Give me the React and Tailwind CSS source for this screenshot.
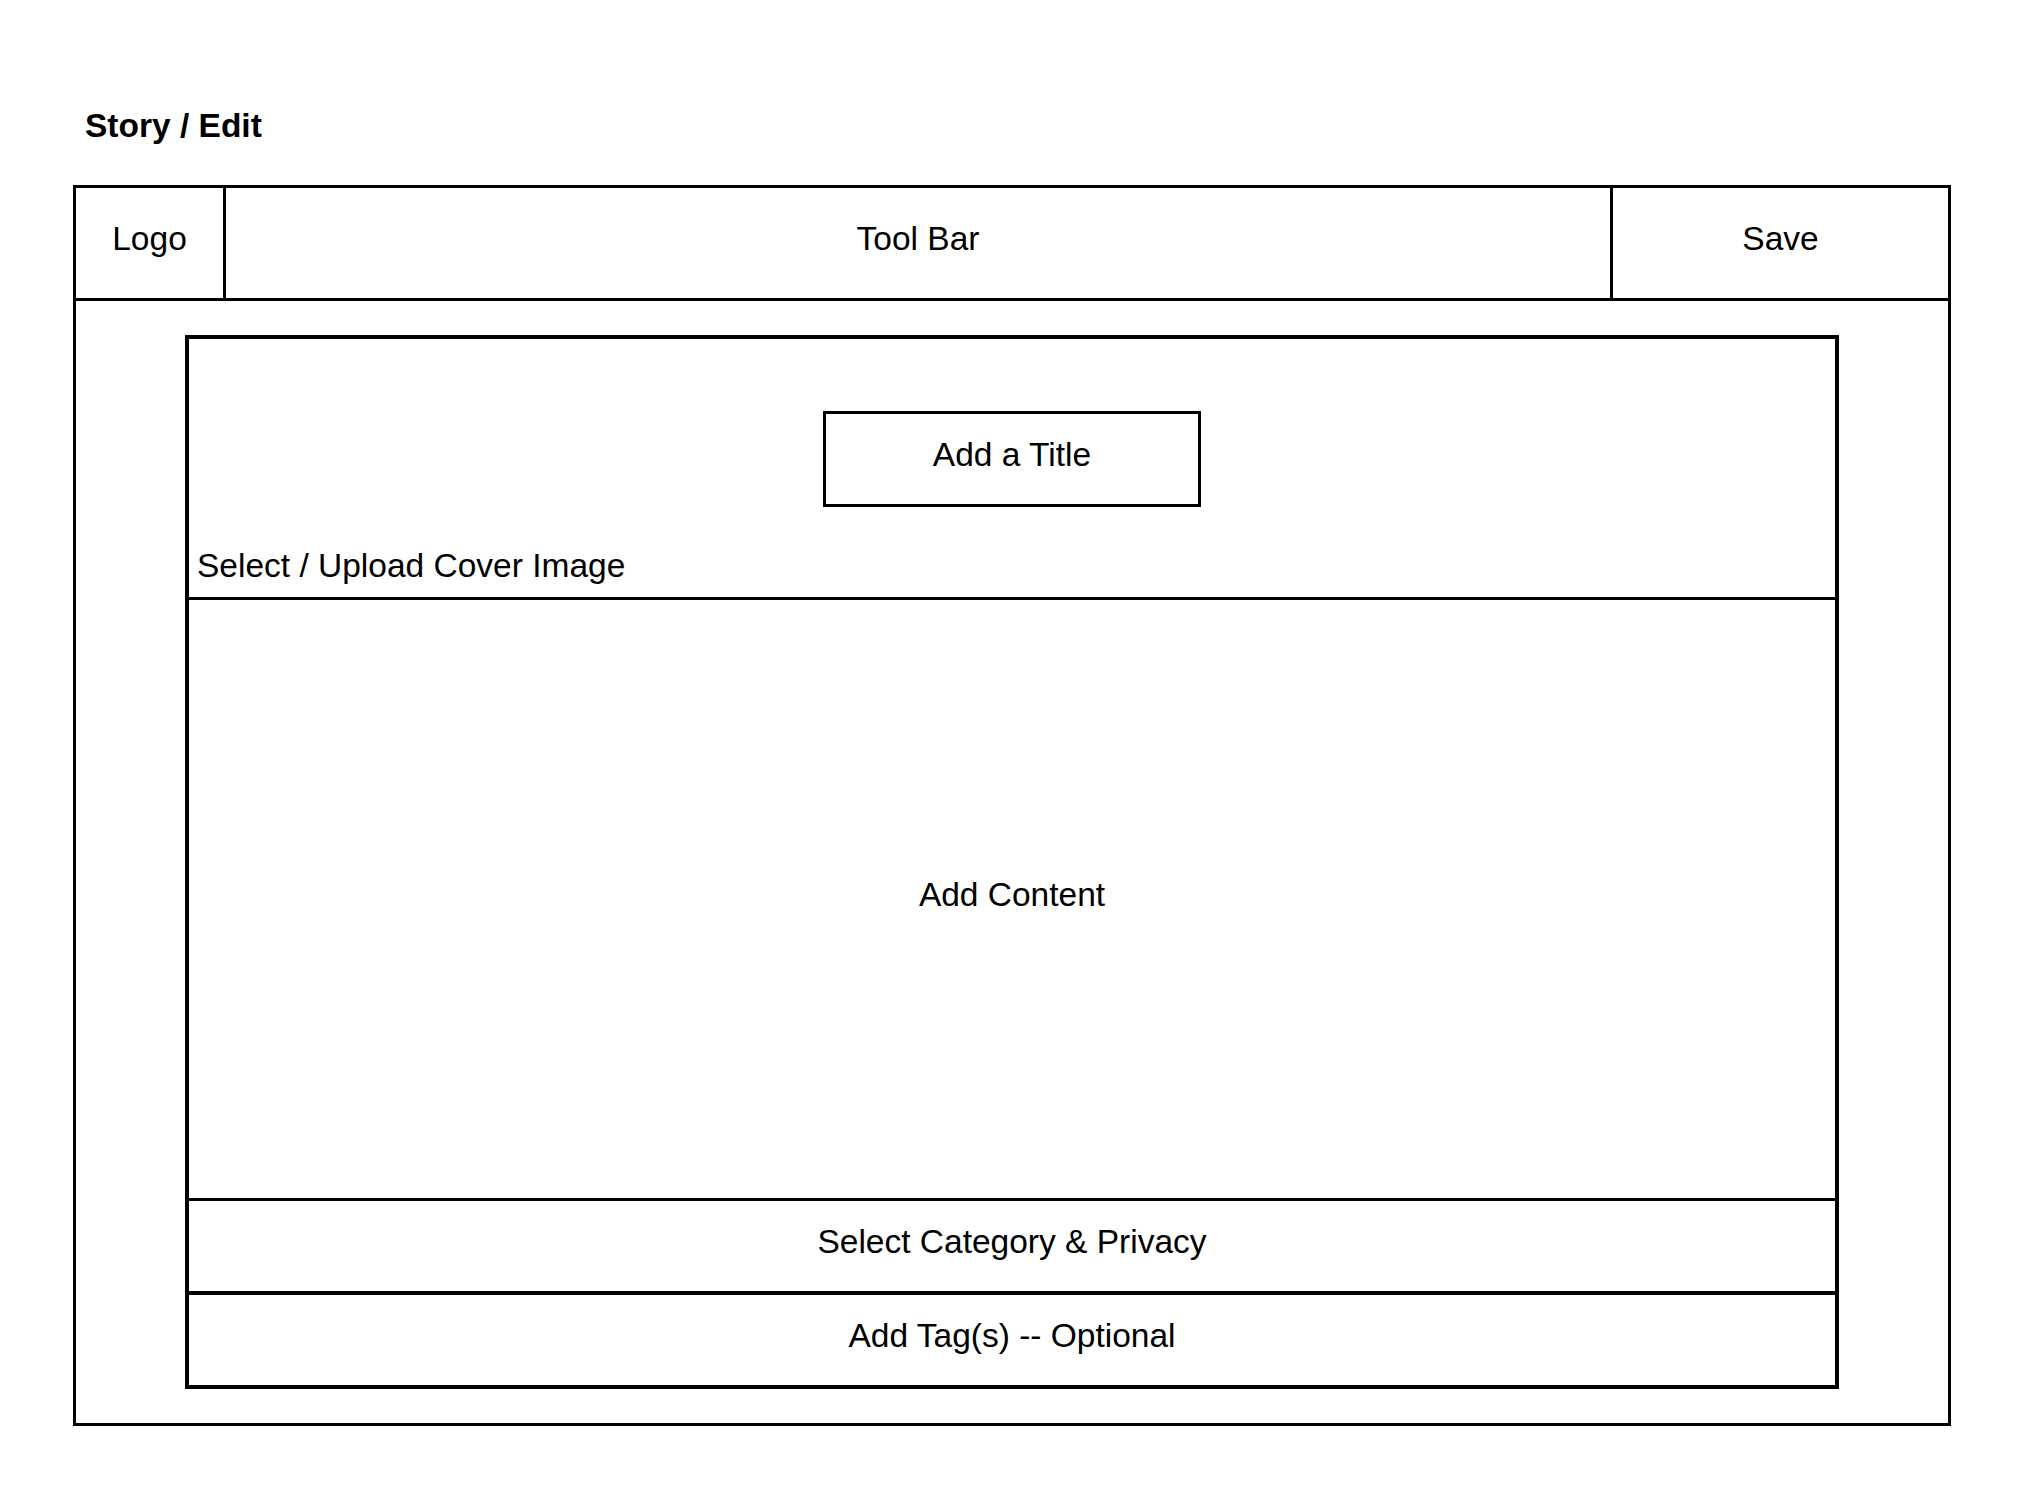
import React from "react";

const cellText = "pb-[8px] text-[33.5px] leading-none text-black";

const StoryEdit = () => {
  return (
    <div
      className="min-h-screen bg-white pt-[109px] pl-[73px] text-black"
      style={{ fontFamily: '"Liberation Sans", Arial, sans-serif' }}
    >
      <h1 className="ml-[12px] text-[33.5px] font-bold leading-none">Story / Edit</h1>

      {/* page frame */}
      <div className="mt-[42px] flex h-[1241px] w-[1878px] flex-col border-[3px] border-black">
        {/* header */}
        <div className="flex h-[113px] border-b-[3px] border-black">
          <div className="flex w-[150px] items-center justify-center border-r-[3px] border-black">
            <span className={cellText}>Logo</span>
          </div>
          <div className="flex flex-1 items-center justify-center border-r-[3px] border-black">
            <span className={cellText}>Tool Bar</span>
          </div>
          <div className="flex w-[335px] items-center justify-center">
            <span className={cellText}>Save</span>
          </div>
        </div>

        {/* editor */}
        <div className="flex flex-1 px-[109px] py-[34px]">
          <div className="flex flex-1 flex-col border-[4px] border-black">
            <div className="flex h-[261px] flex-col border-b-[3px] border-black">
              <div className="mt-[72px] flex h-[96px] w-[378px] items-center justify-center self-center border-[3px] border-black">
                <span className={cellText}>Add a Title</span>
              </div>
              <div className="mt-auto pb-[14px] pl-[8px] text-[33.5px] leading-none">
                Select / Upload Cover Image
              </div>
            </div>
            <div className="flex flex-1 items-center justify-center border-b-[3px] border-black">
              <span className={cellText}>Add Content</span>
            </div>
            <div className="flex h-[94px] items-center justify-center border-b-[4px] border-black">
              <span className={cellText}>Select Category &amp; Privacy</span>
            </div>
            <div className="flex h-[90px] items-center justify-center">
              <span className={cellText}>Add Tag(s) -- Optional</span>
            </div>
          </div>
        </div>
      </div>
    </div>
  );
};

export default StoryEdit;
